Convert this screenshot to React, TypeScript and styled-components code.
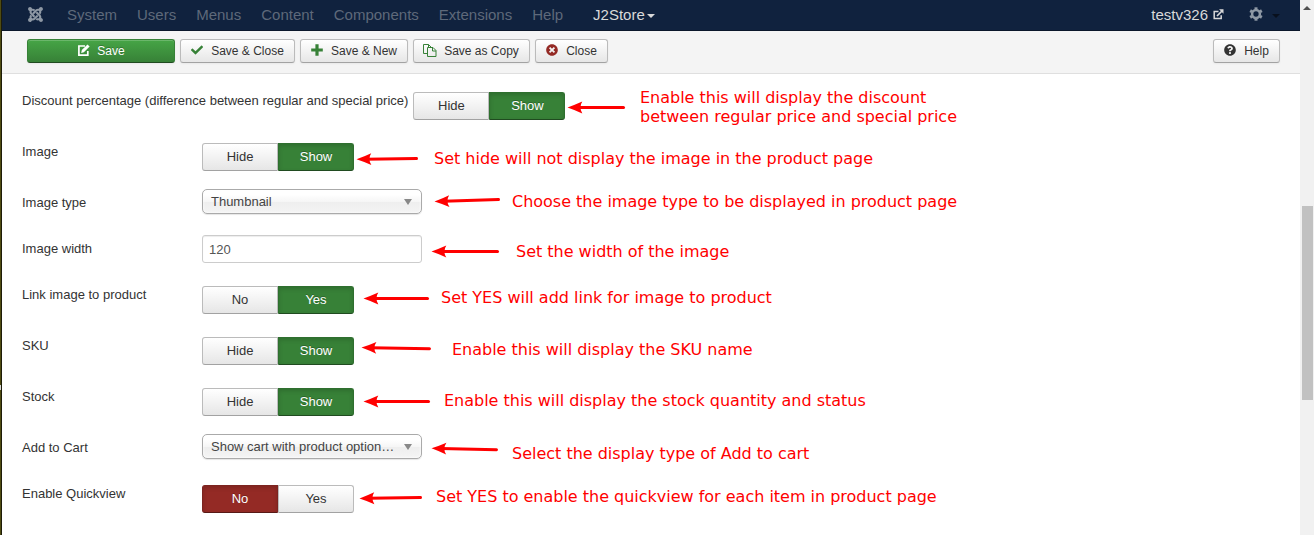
import React from "react";
import styled, { createGlobalStyle, css } from "styled-components";
import { FaJoomla, FaCheck, FaTimesCircle, FaQuestionCircle } from "react-icons/fa";

const GlobalStyle = createGlobalStyle`
  * { box-sizing: border-box; }
  body {
    margin: 0;
    background: #fff;
    overflow: hidden;
    font-family: "Liberation Sans", Arial, sans-serif;
    font-size: 13px;
    line-height: 18px;
    color: #333;
  }
`;

const Screen = styled.div`
  position: relative;
  display: flex;
  width: 1314px;
  height: 535px;
  overflow: hidden;
`;

const DesktopEdge = styled.div`
  width: 2px;
  flex: none;
  padding-top: 385px;
  background: linear-gradient(90deg, #4f4c12 50%, #1d1c08 50%);
`;

const EdgeMark = styled.div`
  width: 1px;
  height: 5px;
  background: #d8d8d8;
`;

const Page = styled.div`
  flex: 1;
  min-width: 0;
  display: flex;
  flex-direction: column;
`;

const Navbar = styled.nav`
  display: flex;
  align-items: center;
  height: 31px;
  flex: none;
  padding: 0 20px 1px 25px;
  background: #10223e;
  border-bottom: 1px solid #0b172b;
  font-size: 15px;
  color: #d9d9d9;
`;

const Brand = styled.span`
  display: flex;
  width: 40px;
  padding-bottom: 1px;
  color: #8f99a5;
`;

const Menu = styled.div`
  display: flex;
  gap: 20px;
  color: #5e697a;
`;

const ActiveItem = styled.span`
  display: flex;
  align-items: center;
  gap: 2px;
  margin-left: 30px;
`;

const Caret = styled.span<{ $color: string }>`
  margin-top: 2px;
  border: 4px solid transparent;
  border-top-color: ${(p) => p.$color};
  border-bottom: 0;
`;

const NavRight = styled.div`
  display: flex;
  align-items: center;
  margin-left: auto;
`;

const SiteLink = styled.span`
  display: flex;
  align-items: center;
  gap: 5px;
  margin-right: 25px;
`;

const Settings = styled.span`
  display: flex;
  align-items: center;
  gap: 9px;
`;

const Toolbar = styled.div`
  display: flex;
  gap: 5px;
  height: 43px;
  flex: none;
  padding: 8px 20px 0 25px;
  background: #f4f4f4;
  border-bottom: 1px solid #dfdfdf;
`;

const ToolButton = styled.button<{ $width: number; $primary?: boolean; $end?: boolean }>`
  display: flex;
  align-items: center;
  justify-content: center;
  gap: 7px;
  width: ${(p) => p.$width}px;
  height: 24px;
  padding: 0 1px 0 0;
  border: 1px solid #bbb;
  border-bottom-color: #a2a2a2;
  border-radius: 3px;
  background: linear-gradient(#fff, #e6e6e6);
  box-shadow: inset 0 1px 0 rgba(255, 255, 255, 0.2), 0 1px 2px rgba(0, 0, 0, 0.05);
  font: 12px/18px "Liberation Sans", Arial, sans-serif;
  color: #333;
  ${(p) => p.$end && "margin-left: auto;"}
  ${(p) =>
    p.$primary &&
    css`
      border-color: #378137 #378137 #204b20;
      background: linear-gradient(#46a546, #378137);
      color: #fff;
      text-shadow: 0 -1px 0 rgba(0, 0, 0, 0.25);
    `}
`;

const ButtonIcon = styled.span<{ $color: string }>`
  display: flex;
  justify-content: center;
  width: 14px;
  padding-bottom: 2px;
  color: ${(p) => p.$color};
`;

const Form = styled.form`
  padding: 13px 0 0 20px;
`;

const Row = styled.div<{ $toggle?: boolean }>`
  display: flex;
  align-items: flex-start;
  height: ${(p) => (p.$toggle ? 51 : 46)}px;
  padding-top: ${(p) => (p.$toggle ? 5 : 0)}px;
`;

const Label = styled.label<{ $toggle?: boolean }>`
  flex: none;
  min-width: 180px;
  padding-right: 5px;
  padding-top: ${(p) => (p.$toggle ? 0 : 5)}px;
  white-space: nowrap;
`;

const Group = styled.div`
  display: flex;
`;

const Option = styled.button<{ $tone?: "green" | "red" }>`
  width: 76px;
  height: 28px;
  padding: 0;
  border: 1px solid #bbb;
  border-bottom-color: #a2a2a2;
  border-radius: 3px 0 0 3px;
  background: linear-gradient(#fff, #e6e6e6);
  font: 13px/18px "Liberation Sans", Arial, sans-serif;
  color: #333;
  & + & {
    border-radius: 0 3px 3px 0;
  }
  ${(p) =>
    p.$tone &&
    css`
      border-color: ${p.$tone === "green" ? "#2f6f2f #2f6f2f #204b20" : "#7c2420 #7c2420 #571916"};
      background: ${p.$tone === "green" ? "#378137" : "#942a25"};
      box-shadow: inset 0 2px 4px rgba(0, 0, 0, 0.15);
      color: #fff;
      text-shadow: 0 -1px 0 rgba(0, 0, 0, 0.25);
    `}
`;

const Select = styled.div`
  display: flex;
  align-items: center;
  justify-content: space-between;
  width: 220px;
  height: 25px;
  padding: 0 8px;
  border: 1px solid #aaa;
  border-radius: 5px;
  background: linear-gradient(#fff 20%, #f6f6f6 50%, #eee 52%, #f4f4f4 100%);
  box-shadow: inset 0 0 3px #fff, 0 1px 1px rgba(0, 0, 0, 0.1);
  letter-spacing: -0.01px;
  color: #444;
`;

const SelectArrow = styled.span`
  margin-right: 1px;
  border: 4px solid transparent;
  border-top: 6px solid #888;
  border-bottom: 0;
`;

const TextInput = styled.input`
  width: 220px;
  height: 28px;
  padding: 0 6px;
  border: 1px solid #ccc;
  border-radius: 3px;
  box-shadow: inset 0 1px 1px rgba(0, 0, 0, 0.075);
  font: 13px/18px "Liberation Sans", Arial, sans-serif;
  color: #555;
`;

const Scrollbar = styled.div`
  display: flex;
  flex-direction: column;
  align-items: center;
  width: 14px;
  flex: none;
  background: #f1f1f1;
`;

const ScrollUp = styled.span`
  margin: 6px 0 196px;
  border: 4px solid transparent;
  border-bottom-color: #505050;
  border-top: 0;
`;

const Thumb = styled.div`
  width: 11px;
  height: 194px;
  margin-right: -1px;
  background: #c1c1c1;
`;

const ArrowLayer = styled.svg`
  position: absolute;
  inset: 0;
  pointer-events: none;
`;

const Note = styled.div<{ $x: number; $y: number }>`
  position: absolute;
  left: ${(p) => p.$x}px;
  top: ${(p) => p.$y}px;
  font: 16px/19px "DejaVu Sans", sans-serif;
  letter-spacing: -0.01px;
  white-space: pre;
  color: #f00;
`;

const EditIcon = () => (
  <svg width="13" height="13" viewBox="0 0 13 13" fill="none">
    <path d="M8 2H1.9v9.2h8.9V7" stroke="currentColor" strokeWidth="1.7" />
    <path d="M4.200 9l.6-2.900L10.500.4l2.100 2.100L6.900 8.300z" fill="currentColor" />
  </svg>
);

const PlusIcon = () => (
  <svg width="12" height="12" viewBox="0 0 12 12" stroke="currentColor" strokeWidth="3.200">
    <path d="M6 .2v11.600M.2 6h11.600" />
  </svg>
);

const CopyIcon = () => (
  <svg width="14" height="13" viewBox="0 0 14 13" fill="none" stroke="currentColor">
    <path d="M4.500 9.500h-4v-9h5l3 3M5.500.5v3" />
    <path d="M4.500 3.500h5.500l3 3v6h-8.500zM9.500 3.500v3.500h3.500" />
  </svg>
);

const ExternalIcon = () => (
  <svg width="11" height="11" viewBox="0 0 11 11" fill="none" stroke="currentColor" strokeWidth="1.5">
    <path d="M5.500 2.500H1.200v7h7V6.300" />
    <path d="M4 7l5-5" strokeWidth="1.700" />
    <path d="M6 .3h4.500v4.500z" fill="currentColor" stroke="none" />
  </svg>
);

const Gear = styled.svg`
  margin-bottom: 2px;
`;

const GearIcon = () => (
  <Gear width="14" height="14" viewBox="-7 -7 14 14" stroke="#8f99a5" fill="none">
    <circle r="3.900" strokeWidth="2.500" />
    {[0, 60, 120, 180, 240, 300].map((a) => (
      <path key={a} d="M0-4.600V-6.700" strokeWidth="3" transform={`rotate(${a})`} />
    ))}
  </Gear>
);

const menuItems = ["System", "Users", "Menus", "Content", "Components", "Extensions", "Help"];

type Field =
  | { label: string; kind: "toggle"; options: [string, string]; active: 0 | 1 }
  | { label: string; kind: "select" | "text"; value: string };

const fields: Field[] = [
  { label: "Discount percentage (difference between regular and special price)", kind: "toggle", options: ["Hide", "Show"], active: 1 },
  { label: "Image", kind: "toggle", options: ["Hide", "Show"], active: 1 },
  { label: "Image type", kind: "select", value: "Thumbnail" },
  { label: "Image width", kind: "text", value: "120" },
  { label: "Link image to product", kind: "toggle", options: ["No", "Yes"], active: 1 },
  { label: "SKU", kind: "toggle", options: ["Hide", "Show"], active: 1 },
  { label: "Stock", kind: "toggle", options: ["Hide", "Show"], active: 1 },
  { label: "Add to Cart", kind: "select", value: "Show cart with product option…" },
  { label: "Enable Quickview", kind: "toggle", options: ["No", "Yes"], active: 0 },
];

const notes = [
  { x: 640, y: 88, text: "Enable this will display the discount\nbetween regular price and special price", arrow: [567.5, 107.5, 624, 107.5] },
  { x: 434, y: 149, text: "Set hide will not display the image in the product page", arrow: [356.5, 159.3, 417, 158.5] },
  { x: 512, y: 192, text: "Choose the image type to be displayed in product page", arrow: [434.5, 201.5, 499, 199.5] },
  { x: 516, y: 242, text: "Set the width of the image", arrow: [431.5, 251.5, 498, 251.5] },
  { x: 441, y: 288, text: "Set YES will add link for image to product", arrow: [363.5, 298.5, 428, 298.5] },
  { x: 452, y: 340, text: "Enable this will display the SKU name", arrow: [361.5, 347.5, 430, 348.8] },
  { x: 444, y: 391, text: "Enable this will display the stock quantity and status", arrow: [363.5, 401.5, 429, 401.5] },
  { x: 512, y: 444, text: "Select the display type of Add to cart", arrow: [431.5, 448.3, 497, 449.8] },
  { x: 436, y: 487, text: "Set YES to enable the quickview for each item in product page", arrow: [359.5, 498.5, 421, 497.5] },
];

const Arrow = ({ points: [x1, y1, x2, y2] }: { points: number[] }) => {
  const length = Math.hypot(x2 - x1, y2 - y1);
  const angle = (Math.atan2(y2 - y1, x2 - x1) * 180) / Math.PI;
  return (
    <g transform={`translate(${x1} ${y1}) rotate(${angle})`}>
      <path d={`M9 0H${length - 0.5}`} stroke="#f00" strokeWidth="3" strokeLinecap="round" />
      <path d="M0 0Q8-2.800 14.800-5.900Q11 0 14.800 5.900Q8 2.800 0 0z" fill="#f00" />
    </g>
  );
};

const Control = ({ field }: { field: Field }) => {
  if (field.kind === "toggle") {
    return (
      <Group>
        {field.options.map((text, i) => (
          <Option key={text} type="button" $tone={i !== field.active ? undefined : i === 1 ? "green" : "red"}>
            {text}
          </Option>
        ))}
      </Group>
    );
  }
  if (field.kind === "select") {
    return (
      <Select>
        {field.value}
        <SelectArrow />
      </Select>
    );
  }
  return <TextInput defaultValue={field.value} />;
};

export default function App() {
  return (
    <Screen>
      <GlobalStyle />
      <DesktopEdge><EdgeMark /></DesktopEdge>
      <Page>
        <Navbar>
          <Brand><FaJoomla size={17} /></Brand>
          <Menu>
            {menuItems.map((item) => <span key={item}>{item}</span>)}
          </Menu>
          <ActiveItem>J2Store<Caret $color="#d9d9d9" /></ActiveItem>
          <NavRight>
            <SiteLink>testv326<ExternalIcon /></SiteLink>
            <Settings><GearIcon /><Caret $color="#08101d" /></Settings>
          </NavRight>
        </Navbar>
        <Toolbar>
          <ToolButton $width={148} $primary><ButtonIcon $color="#fff"><EditIcon /></ButtonIcon>Save</ToolButton>
          <ToolButton $width={115}><ButtonIcon $color="#378137"><FaCheck size={12} /></ButtonIcon>Save &amp; Close</ToolButton>
          <ToolButton $width={108}><ButtonIcon $color="#378137"><PlusIcon /></ButtonIcon>Save &amp; New</ToolButton>
          <ToolButton $width={117}><ButtonIcon $color="#378137"><CopyIcon /></ButtonIcon>Save as Copy</ToolButton>
          <ToolButton $width={73}><ButtonIcon $color="#942a25"><FaTimesCircle size={12} /></ButtonIcon>Close</ToolButton>
          <ToolButton $width={67} $end><ButtonIcon $color="#333"><FaQuestionCircle size={12} /></ButtonIcon>Help</ToolButton>
        </Toolbar>
        <Form>
          {fields.map((field) => (
            <Row key={field.label} $toggle={field.kind === "toggle"}>
              <Label $toggle={field.kind === "toggle"}>{field.label}</Label>
              <Control field={field} />
            </Row>
          ))}
        </Form>
      </Page>
      <Scrollbar>
        <ScrollUp />
        <Thumb />
      </Scrollbar>
      <ArrowLayer width="1314" height="535">
        {notes.map((note) => <Arrow key={note.text} points={note.arrow} />)}
      </ArrowLayer>
      {notes.map((note) => (
        <Note key={note.text} $x={note.x} $y={note.y}>{note.text}</Note>
      ))}
    </Screen>
  );
}
